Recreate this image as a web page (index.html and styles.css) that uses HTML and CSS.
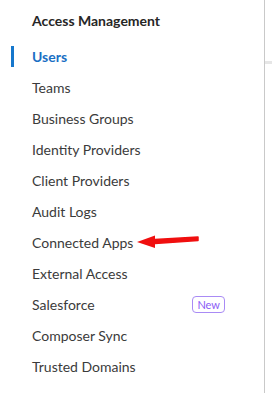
FILE: index.html
```html
<!DOCTYPE html>
<html lang="en">
<head>
  <meta charset="UTF-8" />
  <title>Access Management</title>
  <link rel="stylesheet" href="styles.css">
</head>
<body>
  <div class="page">
    <!-- Sidebar nav -->
    <nav class="sidebar">
      <h3 class="nav-title">Access Management</h3>
      <ul class="nav-list">
        <li class="nav-item active">Users</li>
        <li class="nav-item">Teams</li>
        <li class="nav-item">Business Groups</li>
        <li class="nav-item">Identity Providers</li>
        <li class="nav-item">Client Providers</li>
        <li class="nav-item">Audit Logs</li>
        <li class="nav-item">
          Connected Apps
          <svg class="pointer" width="64" height="16" viewBox="0 0 64 16">
            <path d="M19 5.5 L62 3 L62 6.5 L19 9.5 Z" fill="#f00f0f" stroke="#f00f0f" stroke-width="1.5" stroke-linejoin="round"/>
            <path d="M1 8 L19 1.5 L19 14 Z" fill="#f00f0f"/>
          </svg>
        </li>
        <li class="nav-item">External Access</li>
        <li class="nav-item">Salesforce <span class="badge">New</span></li>
        <li class="nav-item">Composer Sync</li>
        <li class="nav-item">Trusted Domains</li>
      </ul>
    </nav>
    <div class="content">
      <div class="tab-line"></div>
    </div>
  </div>
</body>
</html>
```

FILE: styles.css
```css
* { margin: 0; padding: 0; box-sizing: border-box; }

body {
  background: #fff;
  font-family: 'Lato', 'Open Sans', sans-serif;
  color: #333;
}

.page {
  display: flex;
  min-height: 393px;
}

.sidebar {
  width: 265px;
  border-right: 1px solid #c9c9c9;
  padding-top: 11px;
}

.nav-title {
  font-size: 14px;
  font-weight: 700;
  color: #262626;
  padding-left: 32px;
  height: 20px;
  line-height: 20px;
  margin-bottom: 10px;
}

.nav-list { list-style: none; }

.nav-item {
  position: relative;
  display: flex;
  align-items: center;
  height: 31px;
  padding-left: 32px;
  font-size: 14px;
  color: #3b3b3b;
}

.nav-item.active {
  color: #1a6fc4;
  font-weight: 700;
}

.nav-item.active::before {
  content: "";
  position: absolute;
  left: 11px;
  top: 5px;
  width: 3px;
  height: 21px;
  background: #1677cc;
}

.badge {
  margin-left: auto;
  margin-right: 39px;
  font-size: 11px;
  color: #8b5cf6;
  border: 1px solid #a98bf5;
  border-radius: 4px;
  padding: 0 4px;
  height: 17px;
  line-height: 15px;
}

.pointer {
  position: absolute;
  left: 136px;
  top: 7px;
}

.content { flex: 1; }

.tab-line {
  margin-top: 61px;
  height: 3px;
  background: #e6e6e6;
}
```
